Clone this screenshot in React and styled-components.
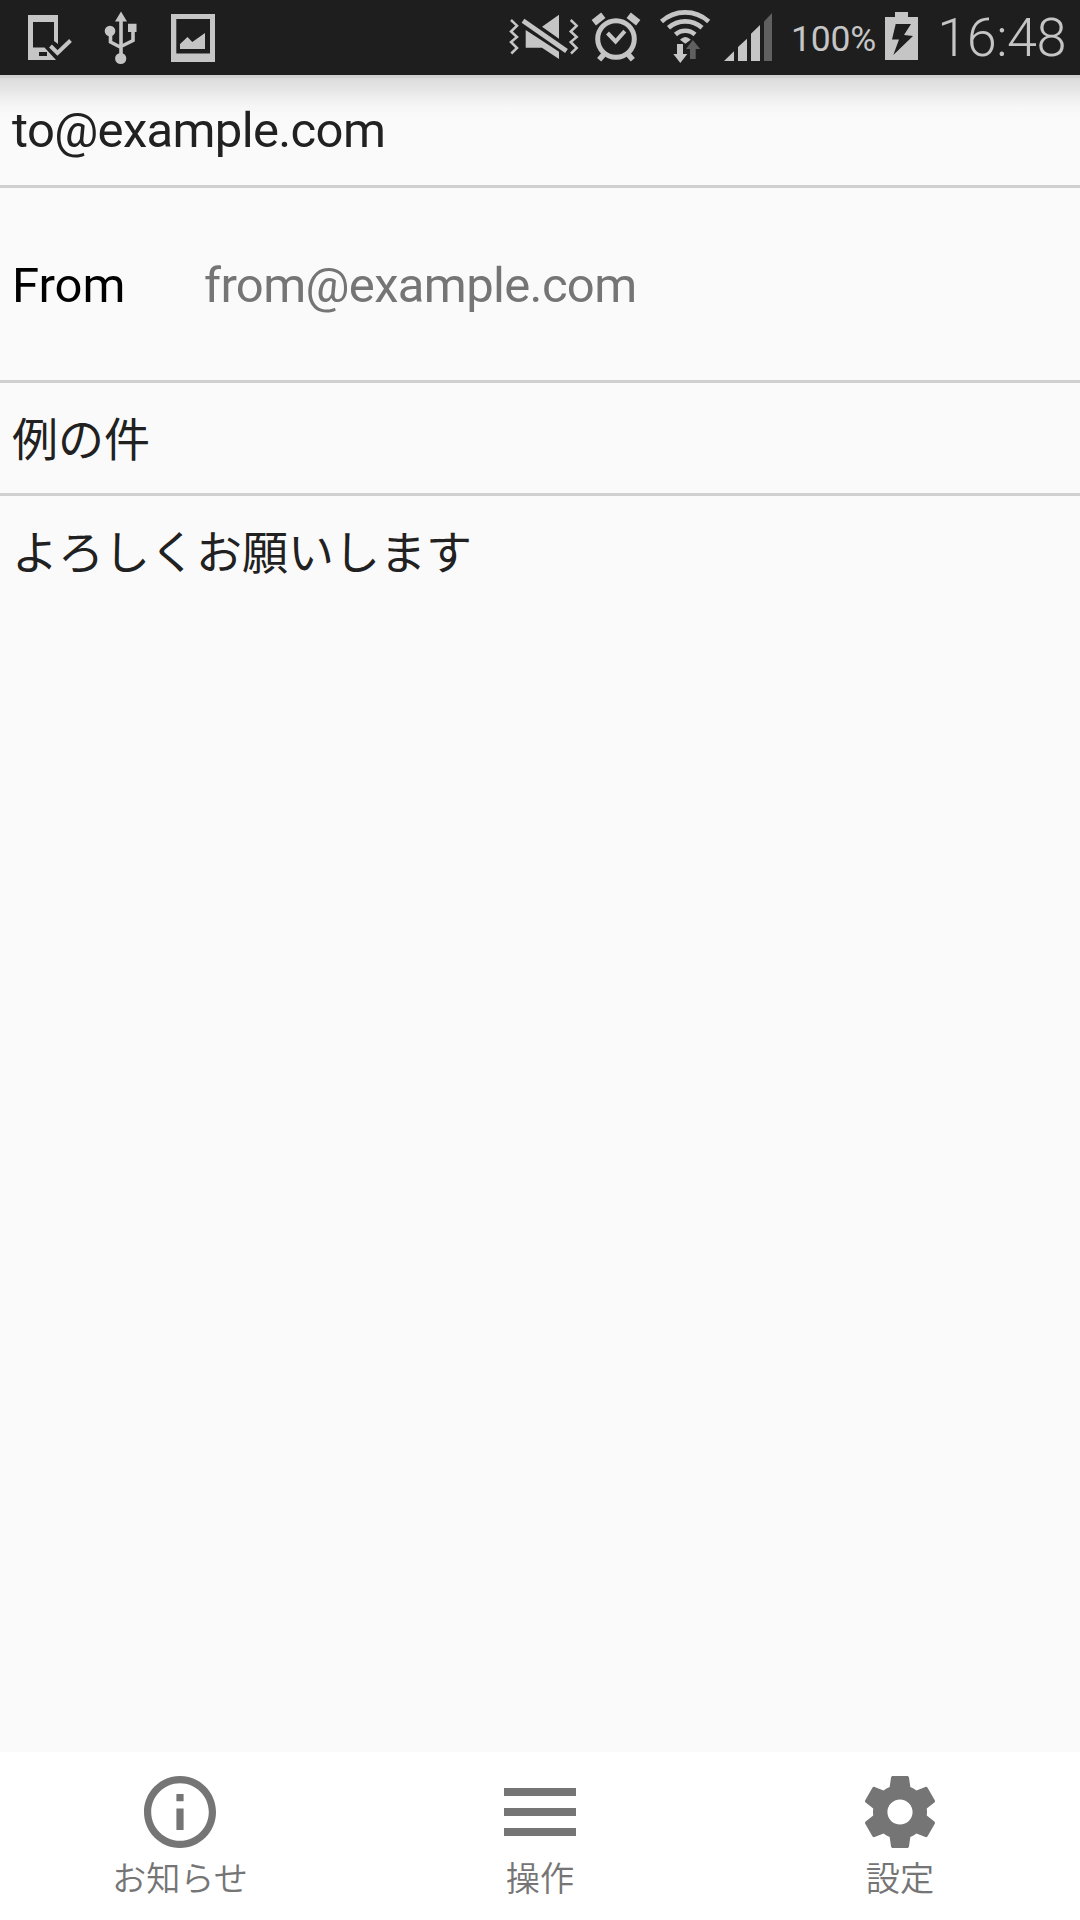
import React from "react";
import styled, { createGlobalStyle } from "styled-components";

const Global = createGlobalStyle`
  *, *::before, *::after { box-sizing: border-box; }
  body { margin: 0; background: #fafafa; }
`;

const Screen = styled.div`
  display: flex;
  flex-direction: column;
  width: 1080px;
  height: 1920px;
  overflow: hidden;
  background: #fafafa;
  font-family: Roboto, "Noto Sans CJK JP", sans-serif;
`;

const StatusBar = styled.header`
  display: flex;
  justify-content: space-between;
  flex: none;
  height: 75px;
  padding: 0 14px 0 27px;
  background: #1e1e1e;
  color: #c5c5c5;
`;

const StatusGroup = styled.div`
  display: flex;
`;

const Glyph = styled.svg`
  display: block;
  flex: none;
  height: 75px;
  margin-right: ${(p) => p.$after}px;
  fill: currentColor;
`;

const Percent = styled.span`
  width: 94px;
  white-space: nowrap;
  font-size: 35.5px;
  line-height: 78px;
  letter-spacing: -0.2px;
`;

const Clock = styled.time`
  width: 131px;
  white-space: nowrap;
  text-align: right;
  font-size: 54px;
  font-weight: 300;
  line-height: 75px;
  letter-spacing: -0.5px;
`;

const Form = styled.main`
  display: flex;
  flex-direction: column;
  flex: 1;
  border-top: 3px solid #d0d0d0;
  background: linear-gradient(#dcdcdc 0, #e2e2e2 8px, #efefef 20px, #f7f7f7 30px, #fafafa 40px);
`;

const Field = styled.div`
  display: flex;
  align-items: center;
  flex: none;
  height: ${(p) => p.$height}px;
  padding: ${(p) => p.$top || 0}px 12px ${(p) => p.$bottom || 0}px;
  border-bottom: ${(p) => (p.$last ? "none" : "3px solid #d0d0d0")};
`;

const Value = styled.span`
  color: ${(p) => p.$color || "#212121"};
  font-size: 49px;
  line-height: 56px;
  letter-spacing: ${(p) => p.$track ?? -0.65}px;
  white-space: nowrap;
`;

const Label = styled(Value)`
  width: 192px;
`;

const Japanese = styled(Value)`
  font-family: "Noto Sans CJK JP", sans-serif;
  font-size: 46px;
  letter-spacing: 0;
`;

const Nav = styled.nav`
  display: grid;
  grid-template-columns: repeat(3, 1fr);
  flex: none;
  height: 168px;
  background: #fff;
`;

const NavItem = styled.div`
  display: flex;
  flex-direction: column;
  align-items: center;
  padding-top: 24px;
  color: #757575;
`;

const NavIcon = styled.svg`
  width: 72px;
  height: 72px;
  fill: currentColor;
`;

const NavLabel = styled.span`
  margin-top: 3px;
  font-family: "Noto Sans CJK JP", sans-serif;
  font-size: 34.2px;
  line-height: 50px;
  font-weight: 350;
`;

const StatusIcon = ({ x, width, after = 0, children }) => (
  <Glyph width={width} viewBox={`${x} 0 ${width} 75`} $after={after} aria-hidden="true">
    {children}
  </Glyph>
);

const line = { fill: "none", stroke: "currentColor" };

const navItems = [
  {
    label: "お知らせ",
    box: "2 2 20 20",
    path: "M11 17h2v-6h-2v6zm1-15C6.48 2 2 6.48 2 12s4.48 10 10 10 10-4.48 10-10S17.52 2 12 2zm0 18c-4.41 0-8-3.59-8-8s3.59-8 8-8 8 3.59 8 8-3.59 8-8 8zM11 9h2V7h-2v2z",
  },
  {
    label: "操作",
    box: "3 3 18 18",
    path: "M3 18h18v-2H3v2zm0-5h18v-2H3v2zm0-7v2h18V6H3z",
  },
  {
    label: "設定",
    box: "2 2 20 20",
    path: "M19.43 12.98c.04-.32.07-.64.07-.98s-.03-.66-.07-.98l2.11-1.65c.19-.15.24-.42.12-.64l-2-3.46c-.12-.22-.39-.3-.61-.22l-2.49 1c-.52-.4-1.08-.73-1.69-.98l-.38-2.65C14.46 2.18 14.25 2 14 2h-4c-.25 0-.46.18-.49.42l-.38 2.65c-.61.25-1.17.59-1.69.98l-2.49-1c-.23-.09-.49 0-.61.22l-2 3.46c-.13.22-.07.49.12.64l2.11 1.65c-.04.32-.07.65-.07.98s.03.66.07.98l-2.11 1.65c-.19.15-.24.42-.12.64l2 3.46c.12.22.39.3.61.22l2.49-1c.52.4 1.08.73 1.69.98l.38 2.65c.03.24.24.42.49.42h4c.25 0 .46-.18.49-.42l.38-2.65c.61-.25 1.17-.59 1.69-.98l2.49 1c.23.09.49 0 .61-.22l2-3.46c.12-.22.07-.49-.12-.64l-2.11-1.65zM12 15.5c-1.93 0-3.5-1.57-3.5-3.5s1.57-3.5 3.5-3.5 3.5 1.57 3.5 3.5-1.57 3.5-3.5 3.5z",
  },
];

export default function App() {
  return (
    <Screen>
      <Global />
      <StatusBar>
        <StatusGroup>
          <StatusIcon x={27} width={46} after={31}>
            <path fillRule="evenodd" d="M28 15H58V44L54 41V22H33V47.5H44.5L56 60H28ZM39 52V56H47V52Z" />
            <path {...line} strokeWidth="4" d="M50.5 46L57.5 53L70.5 40.5" />
          </StatusIcon>
          <StatusIcon x={104} width={35} after={31}>
            <path d="M121 11.5L115 21.5H127ZM128 23.7H136.5V32H128Z" />
            <circle cx="110" cy="31" r="5.3" />
            <circle cx="120.7" cy="58.5" r="5.6" />
            <path {...line} strokeWidth="3.6" d="M121 20V57M110.5 31V42L121 47.5M133 30V40.5L121 46.5" />
          </StatusIcon>
          <StatusIcon x={170} width={46}>
            <path fillRule="evenodd" d="M171 14H215V62H171ZM176.3 19V53.5H210V19Z" />
            <path d="M180 49V44L187.5 37L192.3 42L205 33V49Z" />
          </StatusIcon>
        </StatusGroup>
        <StatusGroup>
          <StatusIcon x={508} width={72} after={11}>
            <path {...line} strokeWidth="2.5" d="M511 20L517 25.7L511 31.5L517 37L511 42L517 48L511.3 53.5M570.7 20L576.7 25.7L570.7 31.5L576.7 37L570.7 42L576.7 48L571 53.5" />
            <path d="M559 14.7V38.7L542 26.7ZM525.7 30V47.7H542L559 59V51.7Z" />
            <path {...line} strokeWidth="4.8" d="M523 20.7L566.5 51" />
          </StatusIcon>
          <StatusIcon x={591} width={50} after={19}>
            <circle {...line} cx="616" cy="39" r="18.3" strokeWidth="5" />
            <path {...line} strokeWidth="4" d="M607.5 33L615.6 41.5L624.8 31.2" />
            <path {...line} strokeWidth="7" d="M593.8 22.7L603.3 15.3M628.7 15.3L638.2 22.7" />
            <path {...line} strokeWidth="5.5" d="M605 53L599.2 59.7M627 53L632.8 59.7" />
          </StatusIcon>
          <StatusIcon x={660} width={51} after={13}>
            <path {...line} strokeWidth="4.6" d="M661.5 21.5A35 35 0 0 1 708.7 21.5M668.5 27.8A25 25 0 0 1 702 27.8M675.5 34.5A14.5 14.5 0 0 1 695 34.5" />
            <path d="M680 39.7Q685.3 34.5 690.8 39.7L685.3 43.8ZM677 44H683V54H687.3L680.3 63L673.3 54H677Z" />
            <path fill="#606060" d="M692.8 40L686 49H690V59H695.7V49H700.2Z" />
          </StatusIcon>
          <StatusIcon x={724} width={49} after={18}>
            <path d="M724 61H734V51.3ZM738 61H747V38.7L738 47ZM751 61H760V25L751 33.7Z" />
            <path fill="#606060" d="M764 61H772V13L764 21.5Z" />
          </StatusIcon>
          <Percent>100%</Percent>
          <StatusIcon x={885} width={33} after={17}>
            <path fillRule="evenodd" d="M885 17H895V12H908V17H918V60H885ZM895.7 24L892 39.5H899L893.3 55L913 36L904 35L911 24Z" />
          </StatusIcon>
          <Clock>16:48</Clock>
        </StatusGroup>
      </StatusBar>
      <Form>
        <Field $height={110} $bottom={2}>
          <Value>to@example.com</Value>
        </Field>
        <Field $height={195} $top={4}>
          <Label $color="#000" $track={0}>From</Label>
          <Value $color="#757575">from@example.com</Value>
        </Field>
        <Field $height={113} $bottom={4}>
          <Japanese>例の件</Japanese>
        </Field>
        <Field $height={113} $bottom={8} $last>
          <Japanese>よろしくお願いします</Japanese>
        </Field>
      </Form>
      <Nav>
        {navItems.map((item) => (
          <NavItem key={item.label}>
            <NavIcon viewBox={item.box} aria-hidden="true">
              <path d={item.path} />
            </NavIcon>
            <NavLabel>{item.label}</NavLabel>
          </NavItem>
        ))}
      </Nav>
    </Screen>
  );
}
